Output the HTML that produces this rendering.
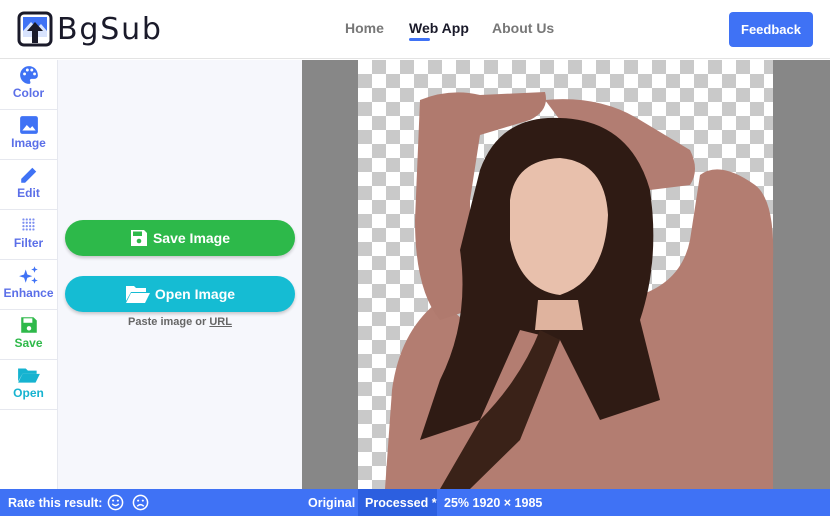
<!DOCTYPE html>
<html><head><style>
*{margin:0;padding:0;box-sizing:border-box}
body{width:830px;height:518px;overflow:hidden;background:#fff;font-family:"Liberation Sans",sans-serif;position:relative}
.hdr{position:absolute;left:0;top:0;width:830px;height:59px;border-bottom:1px solid #e3e3e3;background:#fff}
.nav{position:absolute;top:20px;font-size:14px;font-weight:bold;color:#777}
.side{position:absolute;left:0;top:60px;width:58px;height:429px;border-right:1px solid #e6e8ef;background:#fff}
.it{height:50px;border-bottom:1px solid #e6e8ef;text-align:center;font-size:12px;font-weight:bold;color:#5b6fe8;padding-top:5px}
.it svg{display:block;margin:0 auto 1px}
.panel{position:absolute;left:58px;top:60px;width:244px;height:429px;background:#f6f7fc}
.btn{position:absolute;left:7px;width:230px;height:36px;border-radius:18px;color:#fff;font-size:14px;font-weight:bold;display:flex;align-items:center;justify-content:center;box-shadow:0 2px 3px rgba(0,0,0,.2)}
.view{position:absolute;left:302px;top:60px;width:528px;height:429px;background:#878787;overflow:hidden}
.chk{position:absolute;left:56px;top:0;width:415px;height:429px;background-color:#fff;background-image:linear-gradient(45deg,#c9c9c9 25%,transparent 25%,transparent 75%,#c9c9c9 75%),linear-gradient(45deg,#c9c9c9 25%,transparent 25%,transparent 75%,#c9c9c9 75%);background-size:28px 28px;background-position:0 0,14px 14px}
.bar{position:absolute;left:0;top:489px;width:830px;height:27px;background:#3f72f5;color:#fff;font-size:12.5px;font-weight:bold}
.bar span{position:absolute;top:7px}
.em{position:absolute;top:5px;width:17px;height:17px}
</style></head><body>
<div class="hdr">
<svg style="position:absolute;left:17px;top:11px" width="36" height="36" viewBox="0 0 36 36"><rect x="2" y="2" width="32" height="32" rx="5" fill="none" stroke="#1a1a2a" stroke-width="3"/><rect x="6" y="6" width="24" height="20" fill="#3f72f5"/><path d="M6 20l8-9 6 6 4-4 6 7v6H6z" fill="#fff" opacity=".8"/><path d="M18 11l-8 9h5v12h6V20h5z" fill="#1a1a2a"/></svg>
<div style="position:absolute;left:57px;top:12px;font-size:30px;color:#1a1a2a;letter-spacing:1.8px;font-family:'DejaVu Sans',sans-serif">BgSub</div>
<div class="nav" style="left:345px">Home</div>
<div class="nav" style="left:409px;color:#1a1a2a">Web App</div>
<div style="position:absolute;left:409px;top:38px;width:21px;height:3px;border-radius:2px;background:#3f72f5"></div>
<div class="nav" style="left:492px">About Us</div>
<div style="position:absolute;left:729px;top:12px;width:84px;height:35px;border-radius:4px;background:#3f72f5;color:#fff;font-size:13px;font-weight:bold;text-align:center;line-height:35px">Feedback</div>
</div>
<div class="side">
<div class="it"><svg width="20" height="20" viewBox="0 0 18 18"><path d="M9 1a8 8 0 000 16c1.5 0 1.5-1.5 1-2.5s0-2 1.5-2H14a3 3 0 003-3C17 4.5 13.5 1 9 1z" fill="#3f72f5"/><circle cx="5" cy="8" r="1.3" fill="#fff"/><circle cx="7.5" cy="4.5" r="1.3" fill="#fff"/><circle cx="11.5" cy="4.5" r="1.3" fill="#fff"/><circle cx="14" cy="8" r="1.3" fill="#fff"/></svg>Color</div>
<div class="it"><svg width="20" height="20" viewBox="0 0 18 18"><rect x="1" y="1" width="16" height="16" rx="2" fill="#3f72f5"/><path d="M3 14l4-5 3 3 2-2 3 4z" fill="#fff"/></svg>Image</div>
<div class="it"><svg width="20" height="20" viewBox="0 0 18 18"><path d="M2 16v-3.5L12 2.5l3.5 3.5-10 10z" fill="#3f72f5"/></svg>Edit</div>
<div class="it"><svg width="20" height="20" viewBox="0 0 18 18" fill="#7d8ff0"><g><circle cx="4" cy="4" r="1"/><circle cx="7" cy="4" r="1"/><circle cx="10" cy="4" r="1"/><circle cx="13" cy="4" r="1"/><circle cx="4" cy="7" r="1"/><circle cx="7" cy="7" r="1"/><circle cx="10" cy="7" r="1"/><circle cx="13" cy="7" r="1"/><circle cx="4" cy="10" r="1"/><circle cx="7" cy="10" r="1"/><circle cx="10" cy="10" r="1"/><circle cx="13" cy="10" r="1"/><circle cx="4" cy="13" r="1"/><circle cx="7" cy="13" r="1"/><circle cx="10" cy="13" r="1"/><circle cx="13" cy="13" r="1"/></g></svg>Filter</div>
<div class="it"><svg width="22" height="20" viewBox="0 0 20 18" fill="#3f72f5"><path d="M7 4l1.5 4.5L13 10l-4.5 1.5L7 16l-1.5-4.5L1 10l4.5-1.5z"/><path d="M15 1l.8 2.2L18 4l-2.2.8L15 7l-.8-2.2L12 4l2.2-.8z"/><path d="M15 11l.8 2.2 2.2.8-2.2.8L15 17l-.8-2.2L12 14l2.2-.8z"/></svg>Enhance</div>
<div class="it" style="color:#2fb94a"><svg width="20" height="20" viewBox="0 0 18 18"><path d="M2 2h11l3 3v11H2z" fill="#2fb94a"/><rect x="4" y="3" width="8" height="4" fill="#fff"/><circle cx="9" cy="12" r="2" fill="#fff"/></svg>Save</div>
<div class="it" style="color:#16b3d0"><svg width="24" height="20" viewBox="0 0 22 18"><path d="M1 3h7l2 2h8v3H5L1 15z" fill="#16b3d0"/><path d="M5 8h16l-4 8H1z" fill="#16b3d0"/></svg>Open</div>
</div>
<div class="panel">
<div class="btn" style="top:160px;background:#2db94a"><svg width="18" height="18" viewBox="0 0 18 18" style="margin-right:5px"><path d="M1 1h13l3 3v13H1z" fill="#fff"/><rect x="3" y="2.5" width="9" height="4.5" fill="#2db94a"/><circle cx="9" cy="12" r="2.3" fill="#2db94a"/></svg>Save Image</div>
<div class="btn" style="top:216px;background:#15bcd3"><svg width="26" height="20" viewBox="0 0 26 20" style="margin-right:4px"><path d="M1 2h8l2 2h10v4H6L1 17z" fill="#fff"/><path d="M6 9h19l-5 10H1z" fill="#fff"/></svg>Open Image</div>
<div style="position:absolute;top:256px;left:0;width:244px;text-align:center;font-size:11px;font-weight:bold;color:#666">Paste image or <u>URL</u></div>
</div>
<div class="view"><div class="chk"></div>
<svg style="position:absolute;left:0;top:0" width="528" height="429" viewBox="302 60 528 429">
<path d="M385 489L392 390Q400 330 440 300L475 330 560 315 620 300Q680 290 690 240L700 175Q720 160 755 185Q775 200 773 260L773 489z" fill="#b37d71"/>
<path d="M420 100Q450 88 480 95L545 92Q550 110 530 120L480 135 470 200 470 310 440 320Q415 290 415 220z" fill="#b07a6e"/>
<path d="M545 100Q600 95 640 120L690 150Q700 170 690 185L650 190 620 145 560 120z" fill="#b27d72"/>
<path d="M480 170Q500 115 560 118Q630 120 650 190Q660 260 640 320L660 400 600 420 560 340 520 330 480 420 420 440 440 380Q470 320 460 250z" fill="#2f1b14"/>
<path d="M510 200Q515 160 560 158Q605 162 608 215Q605 280 560 295Q520 290 510 240z" fill="#e8c0ac"/>
<path d="M538 300h40l5 30h-48z" fill="#dfb39e"/>
<path d="M480 420Q520 380 540 330L560 340 520 440 470 489 440 489z" fill="#3a2218"/>
</svg>
</div>
<div class="bar">
<span style="left:8px">Rate this result:</span>
<svg class="em" style="left:107px" viewBox="0 0 18 18"><circle cx="9" cy="9" r="7.5" fill="none" stroke="#fff" stroke-width="1.6"/><circle cx="6.5" cy="7" r="1.1" fill="#fff"/><circle cx="11.5" cy="7" r="1.1" fill="#fff"/><path d="M5.5 10.5q3.5 3.5 7 0" fill="none" stroke="#fff" stroke-width="1.5"/></svg>
<svg class="em" style="left:132px" viewBox="0 0 18 18"><circle cx="9" cy="9" r="7.5" fill="none" stroke="#fff" stroke-width="1.6"/><circle cx="6.5" cy="7" r="1.1" fill="#fff"/><circle cx="11.5" cy="7" r="1.1" fill="#fff"/><path d="M5.5 13q3.5-3.5 7 0" fill="none" stroke="#fff" stroke-width="1.5"/></svg>
<span style="left:308px">Original</span>
<div style="position:absolute;left:358px;top:0;width:79px;height:27px;background:#2c5fe0"></div>
<span style="left:365px">Processed *</span>
<span style="left:444px">25% 1920 × 1985</span>
</div>
</body></html>
